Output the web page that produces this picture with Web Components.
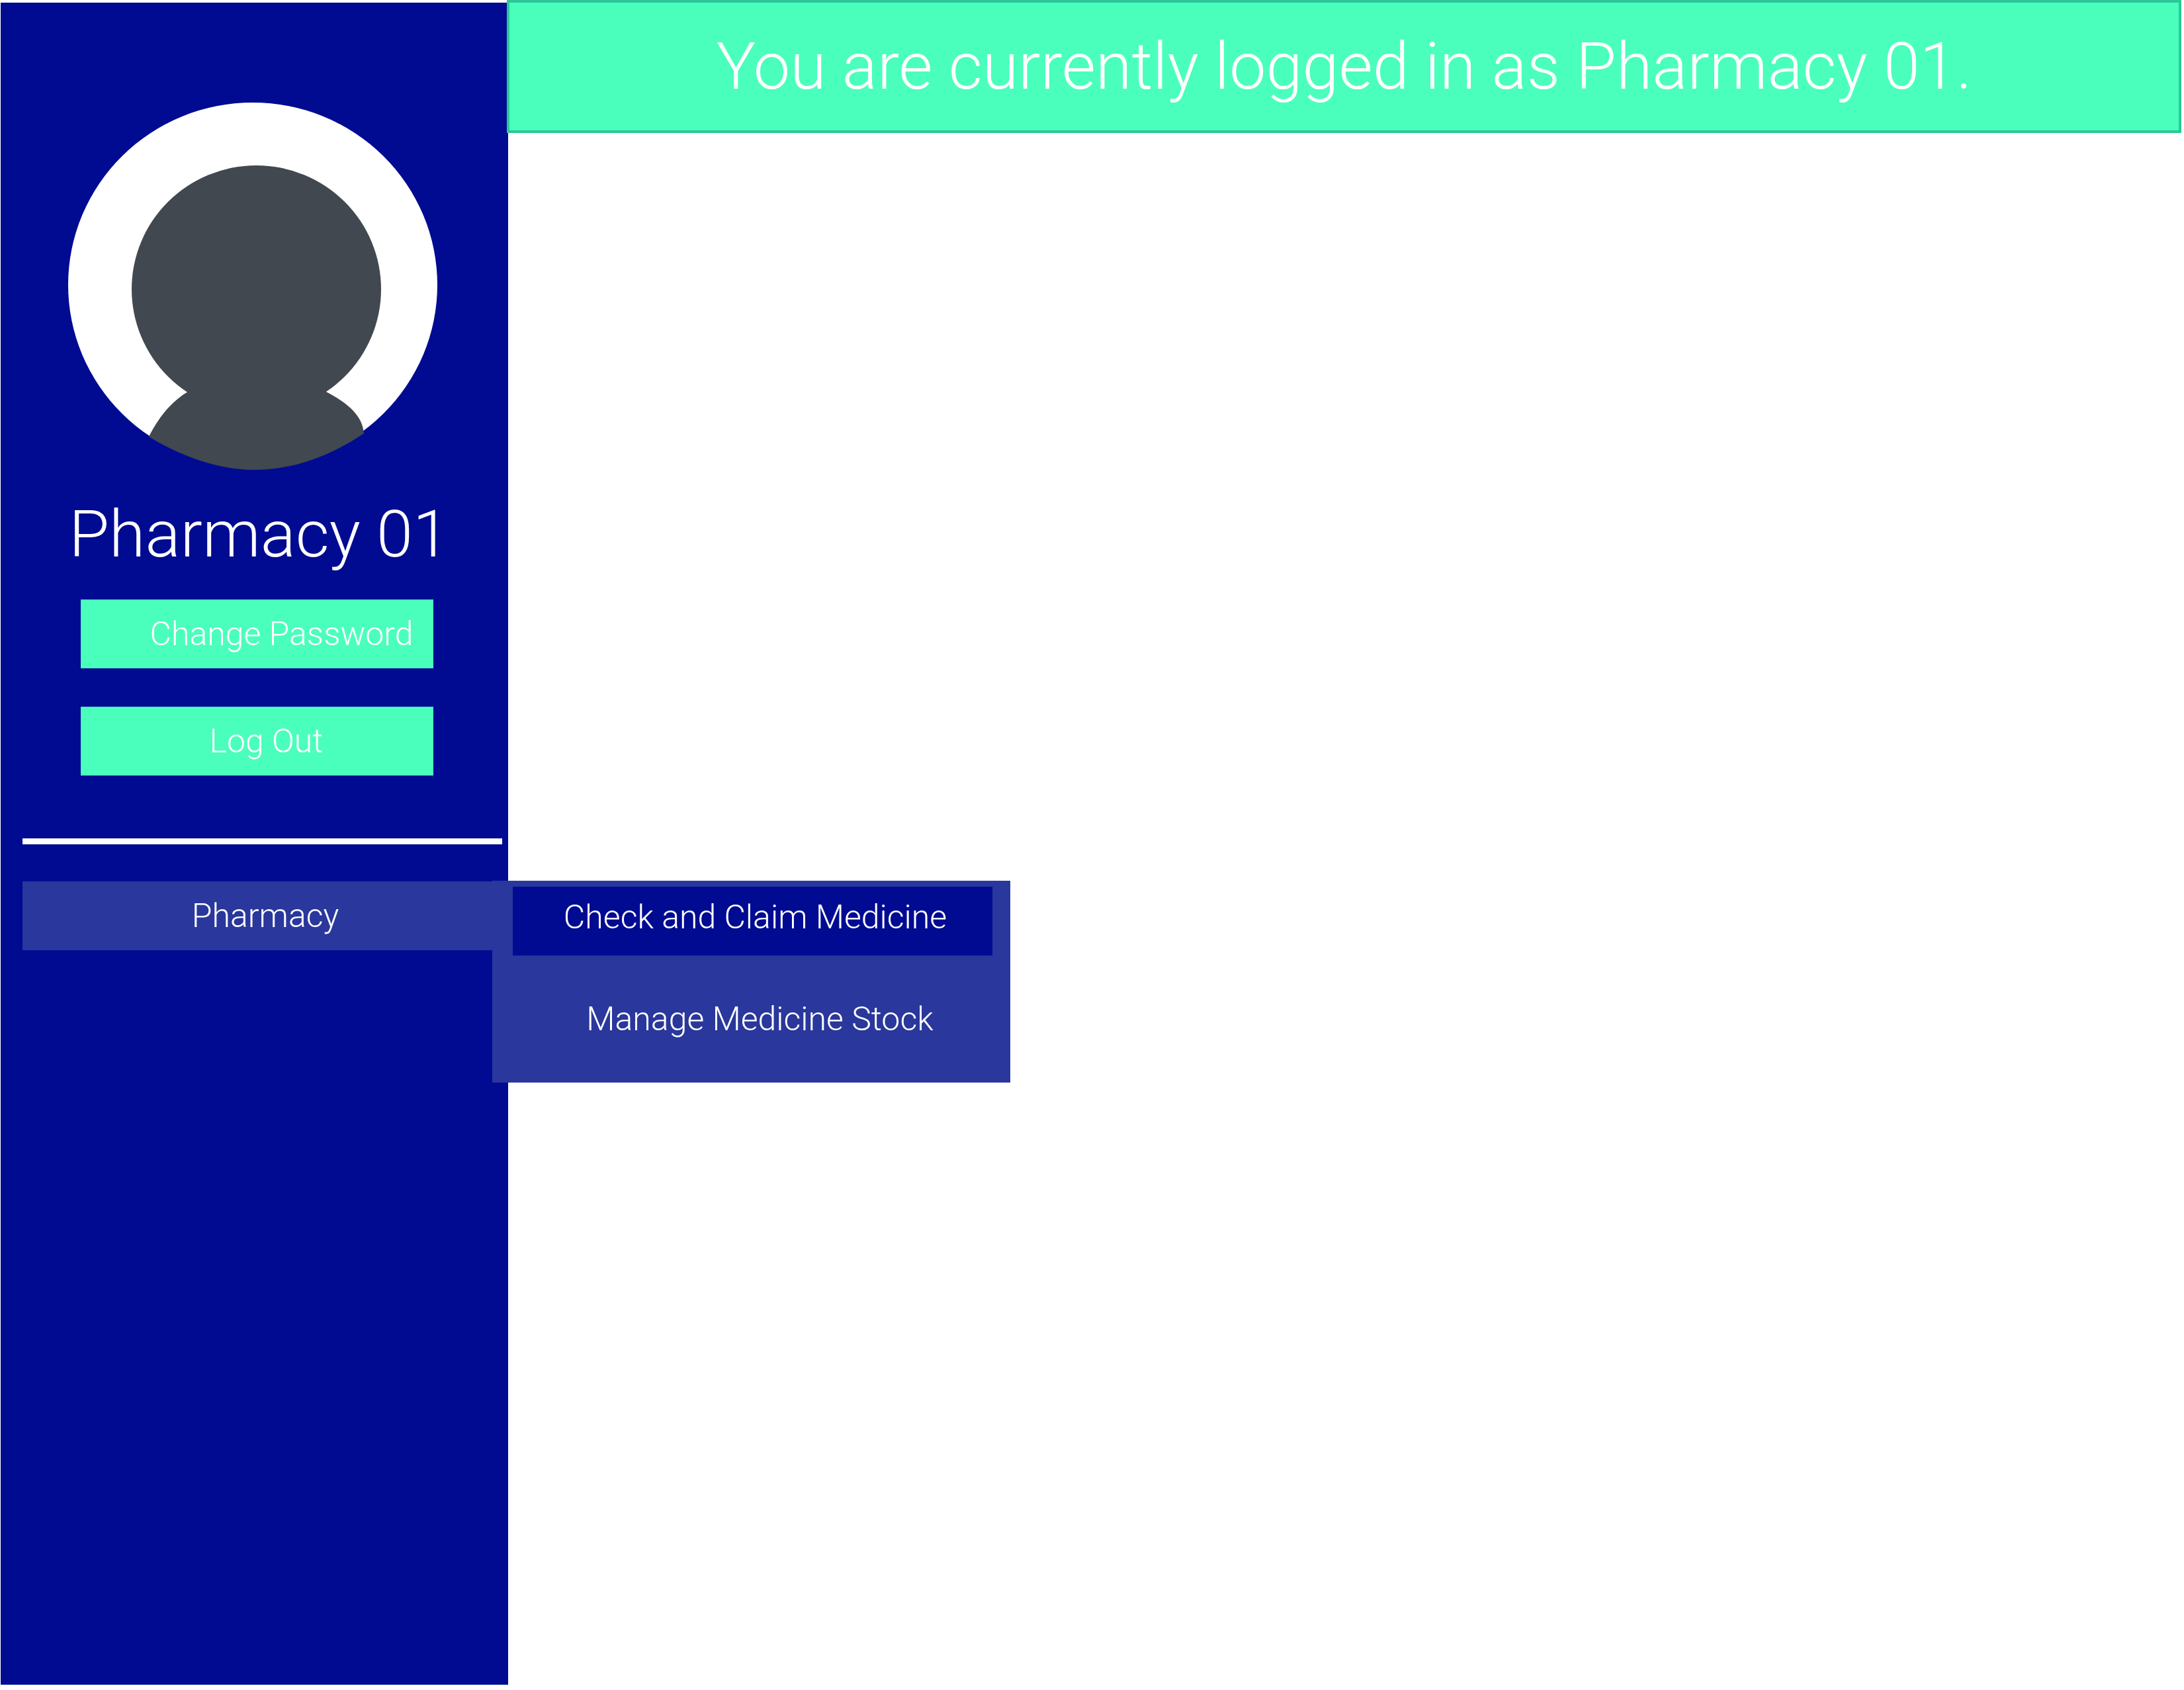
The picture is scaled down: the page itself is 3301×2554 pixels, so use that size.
<!DOCTYPE html>
<html lang="en">
<head>
<meta charset="utf-8">
<title>Pharmacy 01</title>
<style>
  :root {
    --navy: #000b92;
    --indigo: #2a379c;
    --mint: #4affbc;
    --mint-edge: #2dc69b;
    --slate: #41484f;
    --text-large: 99px;
    --text-small: 50px;
  }
  body {
    margin: 0;
    background: #fff;
    color: #fff;
    font-family: Roboto, "Helvetica Neue", "Liberation Sans", sans-serif;
    font-weight: 300;
  }
</style>
</head>
<body>

<template id="app-shell">
  <style>
    :host { display: flex; min-height: 100vh; box-sizing: border-box; padding: 0 4px 8px 1px; }
    main { flex: 1; min-width: 0; margin-left: -2px; z-index: 1; }
  </style>
  <slot name="side"></slot>
  <main><slot></slot></main>
</template>

<template id="status-banner">
  <style>
    :host {
      display: block; box-sizing: border-box; padding: 38px 24px;
      background: var(--mint); border: 4px solid var(--mint-edge);
      text-align: center; font-size: var(--text-large); line-height: 117px;
    }
    p { margin: 0; }
  </style>
  <p role="status"><slot></slot></p>
</template>

<template id="side-bar">
  <style>
    :host {
      display: flex; flex-direction: column; flex: none; box-sizing: border-box;
      width: 767px; margin-top: 4px; padding-top: 150px; background: var(--navy);
    }
    hr { width: auto; height: 9px; margin: 95px 9px 56px 33px; border: 0; background: #fff; }
  </style>
  <slot name="profile"></slot>
  <hr>
  <slot></slot>
</template>

<template id="user-profile">
  <style>
    :host { display: flex; flex-direction: column; }
    h1 {
      margin: 39px 0 41px; padding-left: 14px; font-size: var(--text-large);
      line-height: 116px; font-weight: inherit; text-align: center; white-space: nowrap;
    }
    .actions { display: flex; flex-direction: column; gap: 58px; padding: 0 113px 0 121px; }
  </style>
  <user-avatar></user-avatar>
  <h1><slot name="name"></slot></h1>
  <div class="actions"><slot></slot></div>
</template>

<template id="user-avatar">
  <style>
    :host { display: flex; justify-content: center; }
    svg { display: block; width: 565px; height: 556px; }
    .figure { fill: var(--slate); }
  </style>
  <svg viewBox="102 154 565 556" role="img" aria-label="User avatar">
    <ellipse cx="382" cy="430.500" rx="279" ry="275.500" fill="#fff"/>
    <g class="figure">
      <ellipse cx="387.500" cy="437" rx="188.500" ry="187"/>
      <path d="M225 660C240 630 260 606 284 592L320 560H460L491 591C522 607 548 626 550 655C495 692 440 710 385 710C335 710 280 693 225 660Z"/>
    </g>
  </svg>
</template>

<template id="action-button">
  <style>
    :host { display: block; }
    button {
      display: block; box-sizing: border-box; width: 100%; margin: 0; border: 0;
      padding: 22px 0; background: var(--mint); color: inherit; font: inherit;
      font-size: var(--text-small); line-height: 60px; text-align: center;
    }
    :host([indent="wide"]) button { padding-left: 74px; }
    :host([indent="narrow"]) button { padding-left: 28px; }
  </style>
  <button type="button"><slot></slot></button>
</template>

<template id="nav-group">
  <style>
    :host { display: block; position: relative; margin-left: 33px; }
    a {
      display: block; padding: 22px 0; background: var(--indigo); color: inherit;
      font-size: var(--text-small); line-height: 60px;
      text-align: center; text-decoration: none;
    }
    .flyout {
      position: absolute; top: -1px; left: 710px; z-index: 2;
      display: flex; flex-direction: column; gap: 50px; box-sizing: border-box;
      width: 783px; padding: 9px 27px 38px 31px; background: var(--indigo);
    }
  </style>
  <nav>
    <a href="#pharmacy" aria-expanded="true"><slot name="label"></slot></a>
    <div class="flyout"><slot></slot></div>
  </nav>
</template>

<template id="nav-item">
  <style>
    :host { display: block; }
    a {
      display: block; padding: 16px 0 28px 8px; color: inherit;
      font-size: var(--text-small); line-height: 60px;
      text-align: center; text-decoration: none;
    }
    :host([active]) a { background: var(--navy); }
    :host(:not([active])) a { padding-left: 22px; }
  </style>
  <a href="#"><slot></slot></a>
</template>

<app-shell>
  <side-bar slot="side">
    <user-profile slot="profile">
      <span slot="name">Pharmacy 01</span>
      <action-button indent="wide">Change Password</action-button>
      <action-button indent="narrow">Log Out</action-button>
    </user-profile>
    <nav-group>
      <span slot="label">Pharmacy</span>
      <nav-item active>Check and Claim Medicine</nav-item>
      <nav-item>Manage Medicine Stock</nav-item>
    </nav-group>
  </side-bar>
  <status-banner>You are currently logged in as Pharmacy 01.</status-banner>
</app-shell>

<script>
  class TemplateElement extends HTMLElement {
    constructor() {
      super();
      const template = document.getElementById(this.localName);
      this.attachShadow({ mode: 'open' }).append(template.content.cloneNode(true));
    }
  }
  for (const name of ['app-shell', 'status-banner', 'side-bar', 'user-avatar',
                      'user-profile', 'action-button', 'nav-group', 'nav-item']) {
    customElements.define(name, class extends TemplateElement {});
  }
</script>
</body>
</html>
